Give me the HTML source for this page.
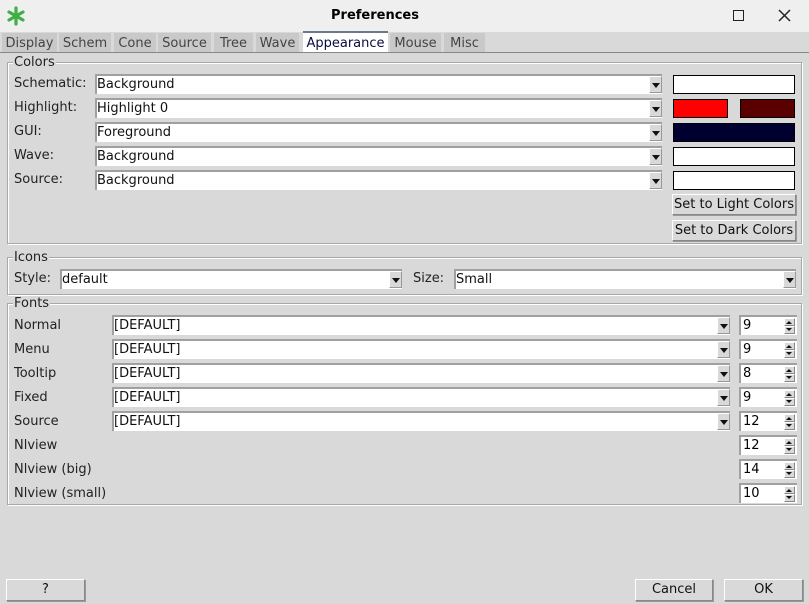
<!DOCTYPE html>
<html><head><meta charset="utf-8"><style>
*{box-sizing:border-box;margin:0;padding:0}
body{width:809px;height:604px;background:#d9d9d9;font-family:"DejaVu Sans","Liberation Sans",sans-serif;font-size:13px;color:#000;position:relative;overflow:hidden}
.a{position:absolute;white-space:nowrap}
.title{top:0;left:0;width:809px;height:32px;background:#efefef}
.tab{position:absolute;top:33px;height:19px;background:#c9c9c9;color:#444;line-height:21px;text-align:center;font-size:13px}
.tab.act{background:#fff;color:#0a0a40;top:31px;height:22px;border-top:2px solid #6a7a8a;line-height:21px}
.grp{position:absolute;border:1px solid #a8a8a8;box-shadow:inset 1px 1px 0 #fff,1px 1px 0 #fff}
.gl{position:absolute;background:#d9d9d9;padding:0 1px;line-height:14px;color:#222}
.cb{position:absolute;background:#fff;border-top:2px solid #a0a0a0;border-left:2px solid #a0a0a0;height:20px;line-height:18px;padding-left:0px;color:#111}
.cb .ar{position:absolute;right:0;top:0;width:13px;height:17px;background:#d9d9d9;border:1px solid #999;border-top-color:#fff;border-left-color:#fff}
.cb .ar:after{content:"";position:absolute;left:2px;top:6px;border-left:4px solid transparent;border-right:4px solid transparent;border-top:5px solid #111}
.sw{position:absolute;border:1px solid #000;height:19px}
.btn{position:absolute;background:#d9d9d9;border:1px solid #888;border-top-color:#fff;border-left-color:#fff;box-shadow:1px 1px 0 #999;text-align:center;line-height:20px;color:#111}
.sp{position:absolute;width:58px;height:20px;background:#fff;border-top:2px solid #a0a0a0;border-left:2px solid #a0a0a0;line-height:18px;padding-left:2px}
.sp .u,.sp .d{position:absolute;right:2px;width:11px;height:8px;background:#d9d9d9;border:1px solid #888;border-top-color:#fff;border-left-color:#fff}
.sp .u{top:1px}.sp .d{top:9px}
.sp .u:after{content:"";position:absolute;left:1px;top:2px;border-left:3px solid transparent;border-right:3px solid transparent;border-bottom:3px solid #111}
.sp .d:after{content:"";position:absolute;left:1px;top:1px;border-left:3px solid transparent;border-right:3px solid transparent;border-top:3px solid #111}
.lb{position:absolute;color:#222;line-height:16px}
</style></head><body>
<div class="a title"></div>
<svg class="a" style="left:5px;top:5px" width="22" height="22" viewBox="0 0 22 22"><g stroke="#3cb043" stroke-width="3.2" stroke-linecap="round"><line x1="11" y1="3" x2="11" y2="19"/><line x1="4" y1="7" x2="18" y2="15"/><line x1="4" y1="15" x2="18" y2="7"/></g></svg>
<div class="a" style="left:0;width:750px;top:8px;text-align:center;font-weight:bold;font-size:13px">Preferences</div>
<div class="a" style="left:733px;top:10px;width:11px;height:11px;border:1.5px solid #222"></div>
<svg class="a" style="left:778px;top:9px" width="13" height="13"><path d="M1 1L12 12M12 1L1 12" stroke="#222" stroke-width="1.5"/></svg>

<div class="tab" style="left:2px;width:55px">Display</div>
<div class="tab" style="left:59px;width:52px">Schem</div>
<div class="tab" style="left:114px;width:42px">Cone</div>
<div class="tab" style="left:158px;width:53px">Source</div>
<div class="tab" style="left:214px;width:39px">Tree</div>
<div class="tab" style="left:256px;width:43px">Wave</div>
<div class="tab act" style="left:303px;width:85px">Appearance</div>
<div class="tab" style="left:390px;width:51px">Mouse</div>
<div class="tab" style="left:444px;width:41px">Misc</div>
<div class="a" style="left:0;top:52px;width:809px;height:1px;background:#888"></div>

<div class="grp" style="left:7px;top:62px;width:795px;height:182px"></div>
<div class="gl" style="left:13px;top:56px">Colors</div>
<div class="lb" style="left:14px;top:76px">Schematic:</div>
<div class="lb" style="left:14px;top:100px">Highlight:</div>
<div class="lb" style="left:14px;top:124px">GUI:</div>
<div class="lb" style="left:14px;top:148px">Wave:</div>
<div class="lb" style="left:14px;top:172px">Source:</div>
<div class="cb" style="left:95px;top:74px;width:567px">Background<div class="ar"></div></div>
<div class="cb" style="left:95px;top:98px;width:567px">Highlight 0<div class="ar"></div></div>
<div class="cb" style="left:95px;top:122px;width:567px">Foreground<div class="ar"></div></div>
<div class="cb" style="left:95px;top:146px;width:567px">Background<div class="ar"></div></div>
<div class="cb" style="left:95px;top:170px;width:567px">Background<div class="ar"></div></div>
<div class="sw" style="left:673px;top:75px;width:122px;background:#fff;border-width:1.5px"></div>
<div class="sw" style="left:673px;top:99px;width:55px;background:#ff0000"></div>
<div class="sw" style="left:740px;top:99px;width:55px;background:#5a0000"></div>
<div class="sw" style="left:673px;top:123px;width:122px;background:#000030"></div>
<div class="sw" style="left:673px;top:147px;width:122px;background:#fff;border-width:1.5px"></div>
<div class="sw" style="left:673px;top:171px;width:122px;background:#fff;border-width:1.5px"></div>
<div class="btn" style="left:672px;top:194px;width:124px;height:21px">Set to Light Colors</div>
<div class="btn" style="left:672px;top:220px;width:124px;height:21px">Set to Dark Colors</div>

<div class="grp" style="left:7px;top:257px;width:795px;height:38px"></div>
<div class="gl" style="left:13px;top:251px">Icons</div>
<div class="lb" style="left:14px;top:271px">Style:</div>
<div class="cb" style="left:60px;top:269px;width:342px">default<div class="ar"></div></div>
<div class="lb" style="left:413px;top:271px">Size:</div>
<div class="cb" style="left:454px;top:269px;width:342px">Small<div class="ar"></div></div>

<div class="grp" style="left:7px;top:303px;width:795px;height:202px"></div>
<div class="gl" style="left:13px;top:297px">Fonts</div>
<div class="lb" style="left:14px;top:318px">Normal</div>
<div class="lb" style="left:14px;top:342px">Menu</div>
<div class="lb" style="left:14px;top:366px">Tooltip</div>
<div class="lb" style="left:14px;top:390px">Fixed</div>
<div class="lb" style="left:14px;top:414px">Source</div>
<div class="lb" style="left:14px;top:438px">Nlview</div>
<div class="lb" style="left:14px;top:462px">Nlview (big)</div>
<div class="lb" style="left:14px;top:486px">Nlview (small)</div>
<div class="cb" style="left:112px;top:315px;width:618px">[DEFAULT]<div class="ar"></div></div>
<div class="cb" style="left:112px;top:339px;width:618px">[DEFAULT]<div class="ar"></div></div>
<div class="cb" style="left:112px;top:363px;width:618px">[DEFAULT]<div class="ar"></div></div>
<div class="cb" style="left:112px;top:387px;width:618px">[DEFAULT]<div class="ar"></div></div>
<div class="cb" style="left:112px;top:411px;width:618px">[DEFAULT]<div class="ar"></div></div>
<div class="sp" style="left:739px;top:315px">9<div class="u"></div><div class="d"></div></div>
<div class="sp" style="left:739px;top:339px">9<div class="u"></div><div class="d"></div></div>
<div class="sp" style="left:739px;top:363px">8<div class="u"></div><div class="d"></div></div>
<div class="sp" style="left:739px;top:387px">9<div class="u"></div><div class="d"></div></div>
<div class="sp" style="left:739px;top:411px">12<div class="u"></div><div class="d"></div></div>
<div class="sp" style="left:739px;top:435px">12<div class="u"></div><div class="d"></div></div>
<div class="sp" style="left:739px;top:459px">14<div class="u"></div><div class="d"></div></div>
<div class="sp" style="left:739px;top:483px">10<div class="u"></div><div class="d"></div></div>

<div class="btn" style="left:6px;top:579px;width:79px;height:22px">?</div>
<div class="btn" style="left:635px;top:579px;width:78px;height:22px">Cancel</div>
<div class="btn" style="left:724px;top:579px;width:79px;height:22px">OK</div>
</body></html>
